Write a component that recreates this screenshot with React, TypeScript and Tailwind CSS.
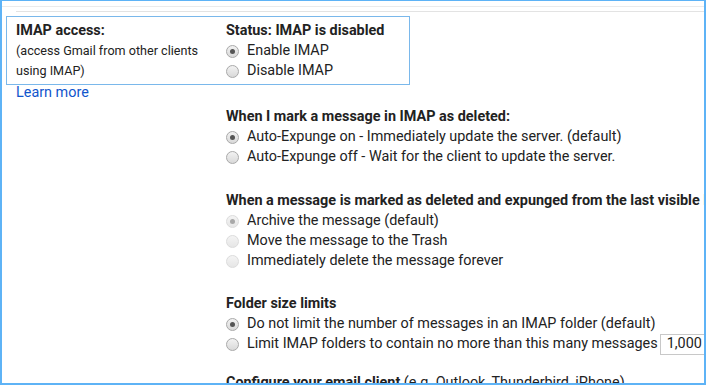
import React from 'react';

type RadioProps = {
    checked?: boolean;
    disabled?: boolean;
};

function Radio({ checked, disabled }: RadioProps) {
    return (
        <span
            className={`mr-[8px] flex h-[13px] w-[13px] shrink-0 items-center justify-center rounded-full border ${
                disabled
                    ? 'border-[#dcdcdc] bg-gradient-to-b from-[#f4f4f4] to-[#e6e6e6]'
                    : 'border-[#a9a9a9] bg-gradient-to-b from-[#f2f2f2] to-[#d9d9d9]'
            }`}
        >
            {checked && (
                <span
                    className={`h-[5px] w-[5px] rounded-full ${
                        disabled ? 'bg-[#a8a8a8]' : 'bg-[#555]'
                    }`}
                />
            )}
        </span>
    );
}

type OptionProps = RadioProps & {
    children: React.ReactNode;
};

function Option({ checked, disabled, children }: OptionProps) {
    return (
        <label className="flex h-[20px] items-center whitespace-nowrap">
            <Radio checked={checked} disabled={disabled} />
            <span>{children}</span>
        </label>
    );
}

function Heading({ children }: { children: React.ReactNode }) {
    return (
        <div className="h-[20px] whitespace-nowrap font-bold leading-[20px]">
            {children}
        </div>
    );
}

export default function App() {
    return (
        <div
            className="h-[385px] w-[706px] overflow-hidden border-b-2 border-l-2 border-r-2 border-t border-[#5eb3f6] bg-white text-[14.4px] text-[#222]"
            style={{ fontFamily: 'Roboto, Arial, sans-serif' }}
        >
            <div className="mt-[5px] h-px bg-[#ebebeb]" />
            <div className="ml-[14px] mt-[4px] h-px bg-[#e3e3e3]" />

            <div className="ml-[4px] mt-[4px] flex h-[69px] w-[404px] border border-[#7ab8eb] pt-[4px] leading-[20px]">
                <div className="w-[219px] pl-[9px]">
                    <div className="font-bold">IMAP access:</div>
                    <div className="text-[12.6px]">(access Gmail from other clients</div>
                    <div className="text-[12.6px]">using IMAP)</div>
                </div>
                <div>
                    <Heading>Status: IMAP is disabled</Heading>
                    <Option checked>Enable IMAP</Option>
                    <Option>Disable IMAP</Option>
                </div>
            </div>
            <div className="pl-[14px] leading-[16px]">
                <a className="text-[#15c]">Learn more</a>
            </div>

            <div className="mt-[6px] pl-[224px]">
                <Heading>When I mark a message in IMAP as deleted:</Heading>
                <Option checked>
                    Auto-Expunge on - Immediately update the server. (default)
                </Option>
                <Option>Auto-Expunge off - Wait for the client to update the server.</Option>

                <div className="mt-[24px]">
                    <Heading>
                        When a message is marked as deleted and expunged from the last
                        visible IMAP folder:
                    </Heading>
                    <Option checked disabled>
                        Archive the message (default)
                    </Option>
                    <Option disabled>Move the message to the Trash</Option>
                    <Option disabled>Immediately delete the message forever</Option>
                </div>

                <div className="mt-[23px]">
                    <Heading>Folder size limits</Heading>
                    <Option checked>
                        Do not limit the number of messages in an IMAP folder (default)
                    </Option>
                    <label className="flex h-[20px] items-center whitespace-nowrap">
                        <Radio />
                        <span>Limit IMAP folders to contain no more than this many messages</span>
                        <span className="ml-[2px] flex h-[21px] w-[60px] shrink-0 items-center border border-[#c8c8c8] pl-[6px]">
                            1,000
                        </span>
                    </label>
                </div>

                <div className="mt-[19px] h-[20px] whitespace-nowrap leading-[20px]">
                    <span className="font-bold">Configure your email client</span> (e.g.
                    Outlook, Thunderbird, iPhone)
                </div>
            </div>
        </div>
    );
}
